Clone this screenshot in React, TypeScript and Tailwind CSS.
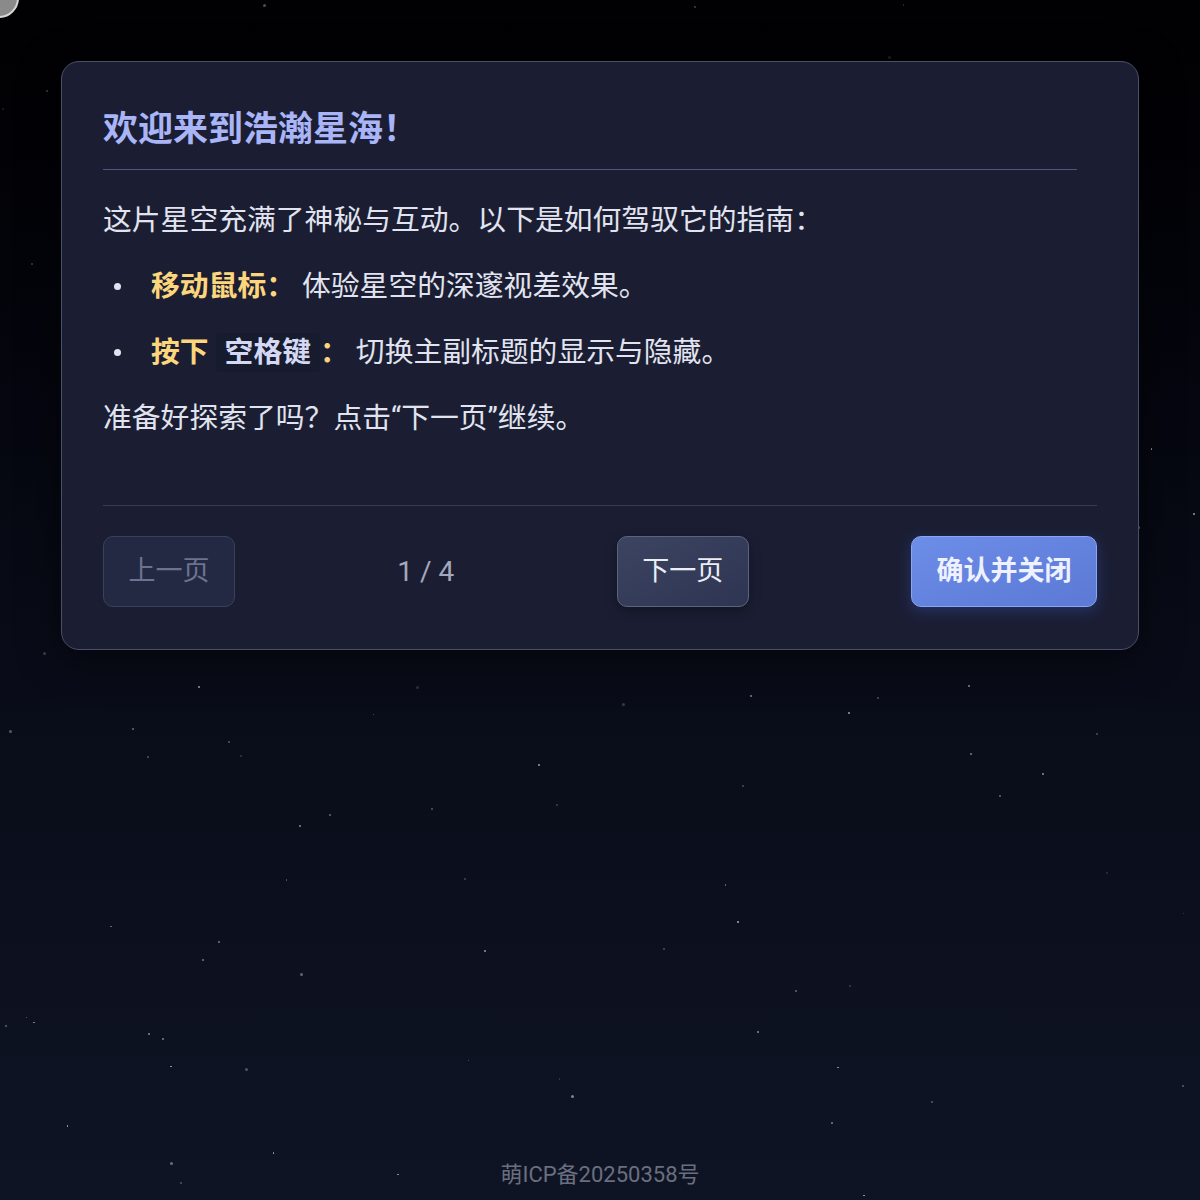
import React from 'react';

// simple seeded random so the star field is the same every render
function makeStars(count: number) {
  let seed = 20250358;
  const rand = () => {
    seed = (seed * 1103515245 + 12345) % 2147483648;
    return seed / 2147483648;
  };
  const stars = [];
  for (let i = 0; i < count; i++) {
    const y = rand() * 1200;
    stars.push({
      x: rand() * 1200,
      y,
      size: rand() < 0.15 ? 3 : rand() < 0.5 ? 2 : 1.5,
      // stars near the top are fainter
      opacity: (0.15 + rand() * 0.5) * (y < 300 ? 0.5 : 1),
    });
  }
  return stars;
}

const stars = makeStars(120);

export default function App() {
  return (
    <div
      className="relative min-h-[1200px] w-full overflow-hidden bg-gradient-to-b from-[#010103] via-[#080b16] to-[#0f1425]"
      style={{ fontFamily: "Roboto, 'Noto Sans CJK SC', sans-serif" }}
    >
      {stars.map((s, i) => (
        <span
          key={i}
          className="absolute rounded-full bg-white"
          style={{ left: s.x, top: s.y, width: s.size, height: s.size, opacity: s.opacity }}
        />
      ))}

      {/* cursor ring */}
      <div className="absolute -left-[21px] -top-[22px] h-[40px] w-[40px] rounded-full border-2 border-[#d6d6d6] bg-[#8a8a8a]" />

      <div className="relative px-[61px] pt-[61px]">
        <div className="rounded-[18px] border-[1.5px] border-[#4a4f66] bg-[#1b1e33] px-[41px] pb-[42px] pt-[44px] shadow-[0_10px_40px_rgba(0,0,0,0.5)]">
          <div className="pr-[20px]">
            <h2 className="border-b-[1.5px] border-[#4d5582] pb-[15px] text-[35px] font-bold leading-[48px] text-[#a9b5f7]">
              欢迎来到浩瀚星海！
            </h2>

            <div className="mt-[28px] flex flex-col gap-[22px] text-[28.8px] leading-[44px] text-[#e1e4ef]">
              <p>这片星空充满了神秘与互动。以下是如何驾驭它的指南：</p>
              <ul className="flex flex-col gap-[22px]">
                <li className="flex items-center">
                  <span className="ml-[11px] mr-[30px] h-[7px] w-[7px] rounded-full bg-[#e1e4ef]" />
                  <span className="font-bold text-[#fcd67c]">移动鼠标：</span>
                  <span className="ml-[7px]">体验星空的深邃视差效果。</span>
                </li>
                <li className="flex items-center">
                  <span className="ml-[11px] mr-[30px] h-[7px] w-[7px] rounded-full bg-[#e1e4ef]" />
                  <span className="font-bold text-[#fcd67c]">按下</span>
                  <span className="ml-[7px] rounded-[4px] bg-[#171b2e] px-[9px] leading-[39px] font-bold text-[#d4d8f2]">
                    空格键
                  </span>
                  <span className="font-bold text-[#fcd67c]">：</span>
                  <span className="ml-[7px]">切换主副标题的显示与隐藏。</span>
                </li>
              </ul>
              <p>准备好探索了吗？点击“下一页”继续。</p>
            </div>
          </div>

          <div className="mt-[65px] flex items-center justify-between border-t-[1.5px] border-[#383d54] pt-[30px]">
            <button
              disabled
              className="h-[71px] w-[132px] rounded-[10px] border-[1.5px] border-[#3b4159] bg-[#232943] text-[27px] text-[#6c7390]"
            >
              上一页
            </button>
            <span className="text-[28px] text-[#a3a8bc]">1 / 4</span>
            <button className="h-[71px] w-[132px] rounded-[10px] border-[1.5px] border-[#5c637c] bg-gradient-to-br from-[#3c4462] to-[#2e3552] text-[27px] text-[#eceef6] shadow-[0_4px_12px_rgba(0,0,0,0.35)]">
              下一页
            </button>
            <button className="h-[71px] w-[186px] rounded-[10px] border-[1.5px] border-[#8aa5f2] bg-gradient-to-br from-[#6c8de8] to-[#5b79d5] text-[27px] font-bold text-[#eef1ff] shadow-[0_4px_14px_rgba(60,90,200,0.35)]">
              确认并关闭
            </button>
          </div>
        </div>
      </div>

      <div className="absolute bottom-[9px] left-0 right-0 text-center text-[22px] text-[#6a6f80]">
        萌ICP备20250358号
      </div>
    </div>
  );
}
